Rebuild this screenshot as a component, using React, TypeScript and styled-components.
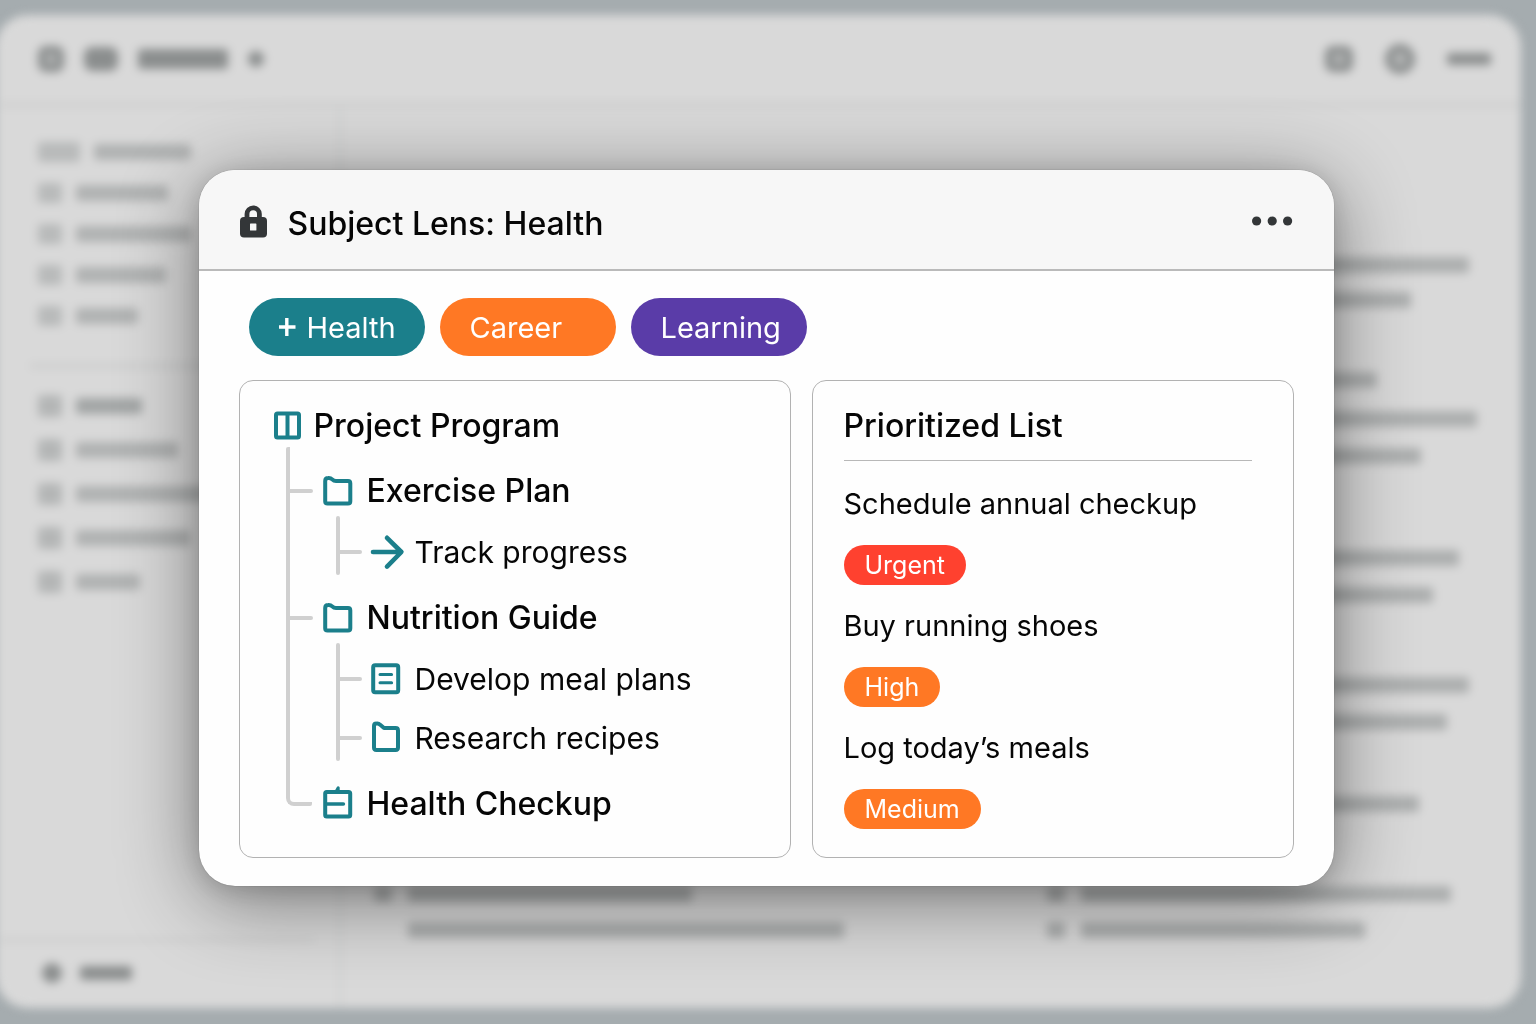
import React from "react";
import styled, { createGlobalStyle } from "styled-components";

const teal = "#1b7f8b";
const orange = "#ff7824";
const purple = "#5a3ca8";
const red = "#ff412f";
const rail = "#d0d0d0";

const GlobalStyle = createGlobalStyle`
  *, *::before, *::after { box-sizing: border-box; }
  body {
    margin: 0;
    background: #a5acaf;
    color: #060606;
    font-family: Inter, Roboto, "Liberation Sans", sans-serif;
  }
  h1, h2, p, ul { margin: 0; padding: 0; }
  ul { list-style: none; }
  button { font: inherit; color: inherit; border: 0; cursor: pointer; }
`;

/* ---------- Blurred workspace behind the dialog ---------- */

const Workspace = styled.div`
  display: flex;
  flex-direction: column;
  min-height: 100vh;
  padding: 15px 15px 16px 0;
  overflow: hidden;
`;

const AppWindow = styled.div`
  flex: 1;
  display: flex;
  flex-direction: column;
  margin-left: -4px;
  padding-left: 4px;
  border-radius: 32px;
  background: #d9d9d9;
  filter: blur(5px);
`;

const TopBar = styled.div`
  display: flex;
  align-items: center;
  justify-content: space-between;
  height: 92px;
  padding: 0 30px 0 38px;
  border-bottom: 4px solid #cccdcd;
`;

const Tools = styled.div<{ $gap: number }>`
  display: flex;
  align-items: center;
  gap: ${(p) => p.$gap}px;
`;

const Glyph = styled.span<{ $w?: number; $h?: number; $round?: boolean; $solid?: boolean; $tone?: string }>`
  flex: none;
  width: ${(p) => p.$w ?? 26}px;
  height: ${(p) => p.$h ?? 26}px;
  border: 8px solid ${(p) => p.$tone ?? "#8b8e8e"};
  border-radius: ${(p) => (p.$round ? "50%" : "8px")};
  background: ${(p) => (p.$solid ? p.$tone ?? "#8b8e8e" : "#b4b6b6")};
`;

const Bar = styled.span<{ $w: number; $h?: number; $tone?: string }>`
  display: block;
  flex: none;
  width: ${(p) => p.$w}px;
  height: ${(p) => p.$h ?? 16}px;
  border-radius: 3px;
  background: ${(p) => p.$tone ?? "#b0b2b2"};
`;

const Columns = styled.div`
  flex: 1;
  display: flex;
`;

const Sidebar = styled.div`
  display: flex;
  flex-direction: column;
  width: 342px;
  padding-top: 24px;
  border-right: 4px solid #d1d2d2;
`;

const SideGroup = styled.div<{ $row: number }>`
  display: grid;
  grid-auto-rows: ${(p) => p.$row}px;
  padding-left: 38px;
`;

const SideRow = styled.div`
  display: flex;
  align-items: center;
  gap: 14px;
`;

const SideRule = styled.div`
  height: 4px;
  margin: 28px 0 16px 30px;
  background: #c9caca;
`;

const SideFooter = styled.div`
  display: flex;
  align-items: center;
  gap: 18px;
  height: 70px;
  margin: auto 24px 0 0;
  padding: 0 0 4px 42px;
  border-top: 4px solid #cccdcd;
`;

const Content = styled.div`
  flex: 1;
  display: flex;
  justify-content: space-between;
  padding: 0 38px 0 32px;
`;

const TextColumn = styled.div`
  width: 436px;
`;

const ContentLine = styled.div<{ $before: number }>`
  display: flex;
  gap: 16px;
  margin-top: ${(p) => p.$before}px;
`;

/* ---------- Dialog ---------- */

const Overlay = styled.div`
  position: fixed;
  inset: 0;
  display: grid;
  place-items: center;
  padding: 32px 20px 0 16px;
  overflow: auto;
`;

const Dialog = styled.section`
  width: 100%;
  max-width: 1135px;
  border-radius: 36px;
  background: #fefefe;
  box-shadow: 0 0 1px rgba(0, 0, 0, 0.5), 0 14px 80px rgba(0, 0, 0, 0.46), 0 4px 24px rgba(0, 0, 0, 0.14);
  overflow: hidden;
`;

const DialogHeader = styled.header`
  display: flex;
  align-items: center;
  gap: 20px;
  height: 101px;
  padding: 4px 40px 0;
  border-bottom: 2px solid #bababa;
  background: #f7f7f7;
`;

const DialogTitle = styled.h1`
  flex: 1;
  padding-top: 4px;
  font-size: 32px;
  line-height: 40px;
  font-weight: 500;
`;

const MoreButton = styled.button`
  display: flex;
  padding: 0;
  background: none;
`;

const DialogBody = styled.div`
  padding: 27px 40px 28px;
`;

const Subjects = styled.div`
  display: flex;
  flex-wrap: wrap;
  gap: 15px;
  padding-left: 10px;
`;

const SubjectPill = styled.button<{ $color: string }>`
  display: flex;
  align-items: center;
  gap: 10px;
  width: 176px;
  height: 58px;
  padding: 2px 20px 0 30px;
  border-radius: 29px;
  background: ${(p) => p.$color};
  color: #fff;
  font-size: 29px;
  line-height: 36px;
`;

const Panels = styled.div`
  display: grid;
  grid-template-columns: 552fr 482fr;
  gap: 21px;
  margin-top: 24px;
`;

const Panel = styled.section`
  border: 1px solid #b2b2b2;
  border-radius: 14px;
`;

const TreePanel = styled(Panel)`
  padding: 14px 34px 21px;
`;

const RootRow = styled.h2`
  display: flex;
  align-items: center;
  gap: 12px;
  height: 62px;
  font-size: 32px;
  line-height: 40px;
  font-weight: 500;
`;

const Branches = styled.ul`
  position: relative;
  display: grid;
  gap: 6px;
  margin-top: 3px;
  padding-left: 49px;

  &::before {
    content: "";
    position: absolute;
    top: -13px;
    bottom: 29px;
    left: 12px;
    width: 26px;
    border: solid ${rail};
    border-width: 0 0 4px 4px;
    border-radius: 2px 2px 2px 8px;
  }
`;

const Branch = styled.li<{ $tick?: boolean }>`
  position: relative;

  &::before {
    content: "";
    position: absolute;
    display: ${(p) => (p.$tick ? "block" : "none")};
    top: 29px;
    left: -35px;
    width: 25px;
    height: 4px;
    border-radius: 2px;
    background: ${rail};
  }
`;

const BranchRow = styled.div`
  display: flex;
  align-items: center;
  gap: 14px;
  height: 62px;
  font-size: 32px;
  line-height: 40px;
  font-weight: 500;
`;

const Leaves = styled.ul`
  position: relative;
  padding-left: 48px;

  &::before {
    content: "";
    position: absolute;
    top: -6px;
    bottom: 6px;
    left: 13px;
    width: 4px;
    border-radius: 2px;
    background: ${rail};
  }
`;

const Leaf = styled.li`
  position: relative;
  display: flex;
  align-items: center;
  gap: 14px;
  height: 59px;
  font-size: 30px;
  line-height: 38px;

  &::before {
    content: "";
    position: absolute;
    top: 28px;
    left: -33px;
    width: 24px;
    height: 4px;
    border-radius: 2px;
    background: ${rail};
  }
`;

const ListPanel = styled(Panel)`
  padding: 25px 41px 28px 31px;
`;

const ListTitle = styled.h2`
  padding-bottom: 14px;
  border-bottom: 1px solid #b8b8b8;
  font-size: 32px;
  line-height: 40px;
  font-weight: 500;
`;

const Tasks = styled.ul`
  display: grid;
  gap: 20px;
  padding-top: 22px;
`;

const Task = styled.li`
  display: grid;
  justify-items: start;
  gap: 20px;
`;

const TaskName = styled.p`
  font-size: 29px;
  line-height: 42px;
`;

const Priority = styled.span<{ $color: string }>`
  height: 40px;
  padding: 0 21px;
  border-radius: 20px;
  background: ${(p) => p.$color};
  color: #fff;
  font-size: 25px;
  line-height: 40px;
`;

/* ---------- Icons ---------- */

const Svg = styled.svg`
  flex: none;
  display: block;
  overflow: visible;
  fill: none;
  stroke: ${teal};
  stroke-width: 4;
  stroke-linecap: round;
  stroke-linejoin: round;
`;

const LockIcon = () => (
  <svg width="29" height="34" viewBox="0 0 29 34" aria-hidden="true">
    <path d="M8 14V9a6.2 6.2 0 0 1 12.4 0v5" fill="none" stroke="#333638" strokeWidth="4.8" />
    <rect x="1" y="12" width="27" height="20.5" rx="4" fill="#333638" />
    <rect x="11" y="18.5" width="6.4" height="7" rx="0.6" fill="#f7f7f7" />
  </svg>
);

const DotsIcon = () => (
  <svg width="42" height="12" viewBox="0 0 42 12" fill="#333638" aria-hidden="true">
    <circle cx="4.6" cy="5" r="4.6" />
    <circle cx="20.2" cy="5" r="4.6" />
    <circle cx="35.6" cy="5" r="4.6" />
  </svg>
);

const PlusIcon = () => (
  <svg width="18" height="20" viewBox="0 0 18 20" stroke="#fff" strokeWidth="3.4" aria-hidden="true">
    <path d="M-1 9H16.5M7.8 0V18" />
  </svg>
);

const BoardIcon = () => (
  <Svg width="28" height="28" viewBox="0 0 28 28" aria-hidden="true">
    <rect x="2" y="1.6" width="23" height="24" rx="1.5" />
    <path d="M13.5 2V25" />
  </Svg>
);

const FolderIcon = () => (
  <Svg width="30" height="30" viewBox="0 0 30 30" aria-hidden="true">
    <path d="M2.2 5Q2.2 2 5.2 2Q7.6 1.8 9.2 3.4Q10.8 5 13 5H25Q27.3 5 27.3 7.4V25.2Q27.3 27.5 25 27.5H4.6Q2.2 27.5 2.2 25.2Z" />
  </Svg>
);

const FileFolderIcon = () => (
  <Svg width="30" height="30" viewBox="0 0 30 30" aria-hidden="true">
    <path d="M3 3Q3 0.6 5.4 0.6Q7.6 0.2 9.2 1.8L13 5H24.6Q27 5 27 7.4V24.6Q27 27 24.6 27H5.4Q3 27 3 24.6Z" />
  </Svg>
);

const NoteIcon = () => (
  <Svg width="30" height="30" viewBox="0 0 30 30" aria-hidden="true">
    <rect x="2.2" y="1.2" width="25" height="27" rx="2" />
    <path d="M9 10.6H20.6M9 18.8H20.6" strokeWidth="3" />
  </Svg>
);

const ClipboardIcon = () => (
  <Svg width="30" height="30" viewBox="0 0 30 30" aria-hidden="true">
    <rect x="2.2" y="3" width="25" height="24.6" rx="1.6" />
    <path d="M3 15H20.4" strokeWidth="3.6" />
    <path d="M13.4 2L15.2 -1.2V2Z" strokeWidth="3" />
  </Svg>
);

const ArrowIcon = () => (
  <Svg width="30" height="32" viewBox="0 0 30 32" aria-hidden="true">
    <path d="M2 16H30M16 1.8L30.4 16L16 30.6" strokeWidth="4.6" />
  </Svg>
);

/* ---------- Data ---------- */

const primaryNav = [
  { icon: 42, width: 97 },
  { icon: 24, width: 92 },
  { icon: 24, width: 115 },
  { icon: 24, width: 90 },
  { icon: 24, width: 62 },
];

const secondaryNav = [
  { width: 66, tone: "#a2a5a5" },
  { width: 102 },
  { width: 130 },
  { width: 114 },
  { width: 64 },
];

const contentLines = [
  { before: 150, left: 300, right: 388 },
  { before: 19, left: 380, right: 330 },
  { before: 64, left: 240, right: 296 },
  { before: 23, left: 400, right: 396 },
  { before: 21, left: 320, right: 340 },
  { before: 86, left: 360, right: 378 },
  { before: 21, left: 300, right: 352 },
  { before: 74, left: 380, right: 388 },
  { before: 21, left: 320, right: 366 },
  { before: 66, left: 300, right: 338 },
  { before: 74, left: 284, right: 370 },
  { before: 20, left: 436, right: 284 },
];

const branches = [
  {
    name: "Exercise Plan",
    icon: <FolderIcon />,
    leaves: [{ name: "Track progress", icon: <ArrowIcon /> }],
  },
  {
    name: "Nutrition Guide",
    icon: <FolderIcon />,
    leaves: [
      { name: "Develop meal plans", icon: <NoteIcon /> },
      { name: "Research recipes", icon: <FileFolderIcon /> },
    ],
  },
  { name: "Health Checkup", icon: <ClipboardIcon />, leaves: [] },
];

const tasks = [
  { name: "Schedule annual checkup", priority: "Urgent", color: red },
  { name: "Buy running shoes", priority: "High", color: orange },
  { name: "Log today’s meals", priority: "Medium", color: orange },
];

const lineTone = "#adafaf";

const Backdrop = () => (
  <Workspace aria-hidden="true">
    <AppWindow>
      <TopBar>
        <Tools $gap={20}>
          <Glyph />
          <Glyph $w={34} $h={24} $solid />
          <Bar $w={90} $h={20} $tone="#8b8e8e" />
          <Glyph $w={12} $h={14} $solid $round />
        </Tools>
        <Tools $gap={32}>
          <Glyph $w={28} />
          <Glyph $w={30} $h={30} $round />
          <Bar $w={44} $h={12} $tone="#8b8e8e" />
        </Tools>
      </TopBar>
      <Columns>
        <Sidebar>
          <SideGroup $row={41}>
            {primaryNav.map((row, i) => (
              <SideRow key={i}>
                <Bar $w={row.icon} $h={20} $tone="#b8baba" />
                <Bar $w={row.width} />
              </SideRow>
            ))}
          </SideGroup>
          <SideRule />
          <SideGroup $row={44}>
            {secondaryNav.map((row, i) => (
              <SideRow key={i}>
                <Bar $w={24} $h={22} $tone="#b4b6b6" />
                <Bar $w={row.width} $tone={row.tone} />
              </SideRow>
            ))}
          </SideGroup>
          <SideFooter>
            <Glyph $w={20} $h={20} $solid $round />
            <Bar $w={52} $h={14} $tone="#8b8e8e" />
          </SideFooter>
        </Sidebar>
        <Content>
          <TextColumn>
            {contentLines.map((line, i) => (
              <ContentLine key={i} $before={line.before}>
                <Bar $w={18} $tone={i === 11 ? "transparent" : lineTone} />
                <Bar $w={line.left} $tone={lineTone} />
              </ContentLine>
            ))}
          </TextColumn>
          <TextColumn>
            {contentLines.map((line, i) => (
              <ContentLine key={i} $before={line.before}>
                <Bar $w={18} $tone={lineTone} />
                <Bar $w={line.right} $tone={lineTone} />
              </ContentLine>
            ))}
          </TextColumn>
        </Content>
      </Columns>
    </AppWindow>
  </Workspace>
);

export default function App() {
  return (
    <>
      <GlobalStyle />
      <Backdrop />
      <Overlay>
        <Dialog role="dialog" aria-labelledby="lens-title">
          <DialogHeader>
            <LockIcon />
            <DialogTitle id="lens-title">Subject Lens: Health</DialogTitle>
            <MoreButton type="button" aria-label="More options">
              <DotsIcon />
            </MoreButton>
          </DialogHeader>
          <DialogBody>
            <Subjects>
              <SubjectPill type="button" $color={teal}>
                <PlusIcon />
                Health
              </SubjectPill>
              <SubjectPill type="button" $color={orange}>
                Career
              </SubjectPill>
              <SubjectPill type="button" $color={purple}>
                Learning
              </SubjectPill>
            </Subjects>
            <Panels>
              <TreePanel>
                <RootRow>
                  <BoardIcon />
                  Project Program
                </RootRow>
                <Branches>
                  {branches.map((branch, i) => (
                    <Branch key={branch.name} $tick={i < branches.length - 1}>
                      <BranchRow>
                        {branch.icon}
                        {branch.name}
                      </BranchRow>
                      {branch.leaves.length > 0 && (
                        <Leaves>
                          {branch.leaves.map((leaf) => (
                            <Leaf key={leaf.name}>
                              {leaf.icon}
                              {leaf.name}
                            </Leaf>
                          ))}
                        </Leaves>
                      )}
                    </Branch>
                  ))}
                </Branches>
              </TreePanel>
              <ListPanel>
                <ListTitle>Prioritized List</ListTitle>
                <Tasks>
                  {tasks.map((task) => (
                    <Task key={task.name}>
                      <TaskName>{task.name}</TaskName>
                      <Priority $color={task.color}>{task.priority}</Priority>
                    </Task>
                  ))}
                </Tasks>
              </ListPanel>
            </Panels>
          </DialogBody>
        </Dialog>
      </Overlay>
    </>
  );
}
